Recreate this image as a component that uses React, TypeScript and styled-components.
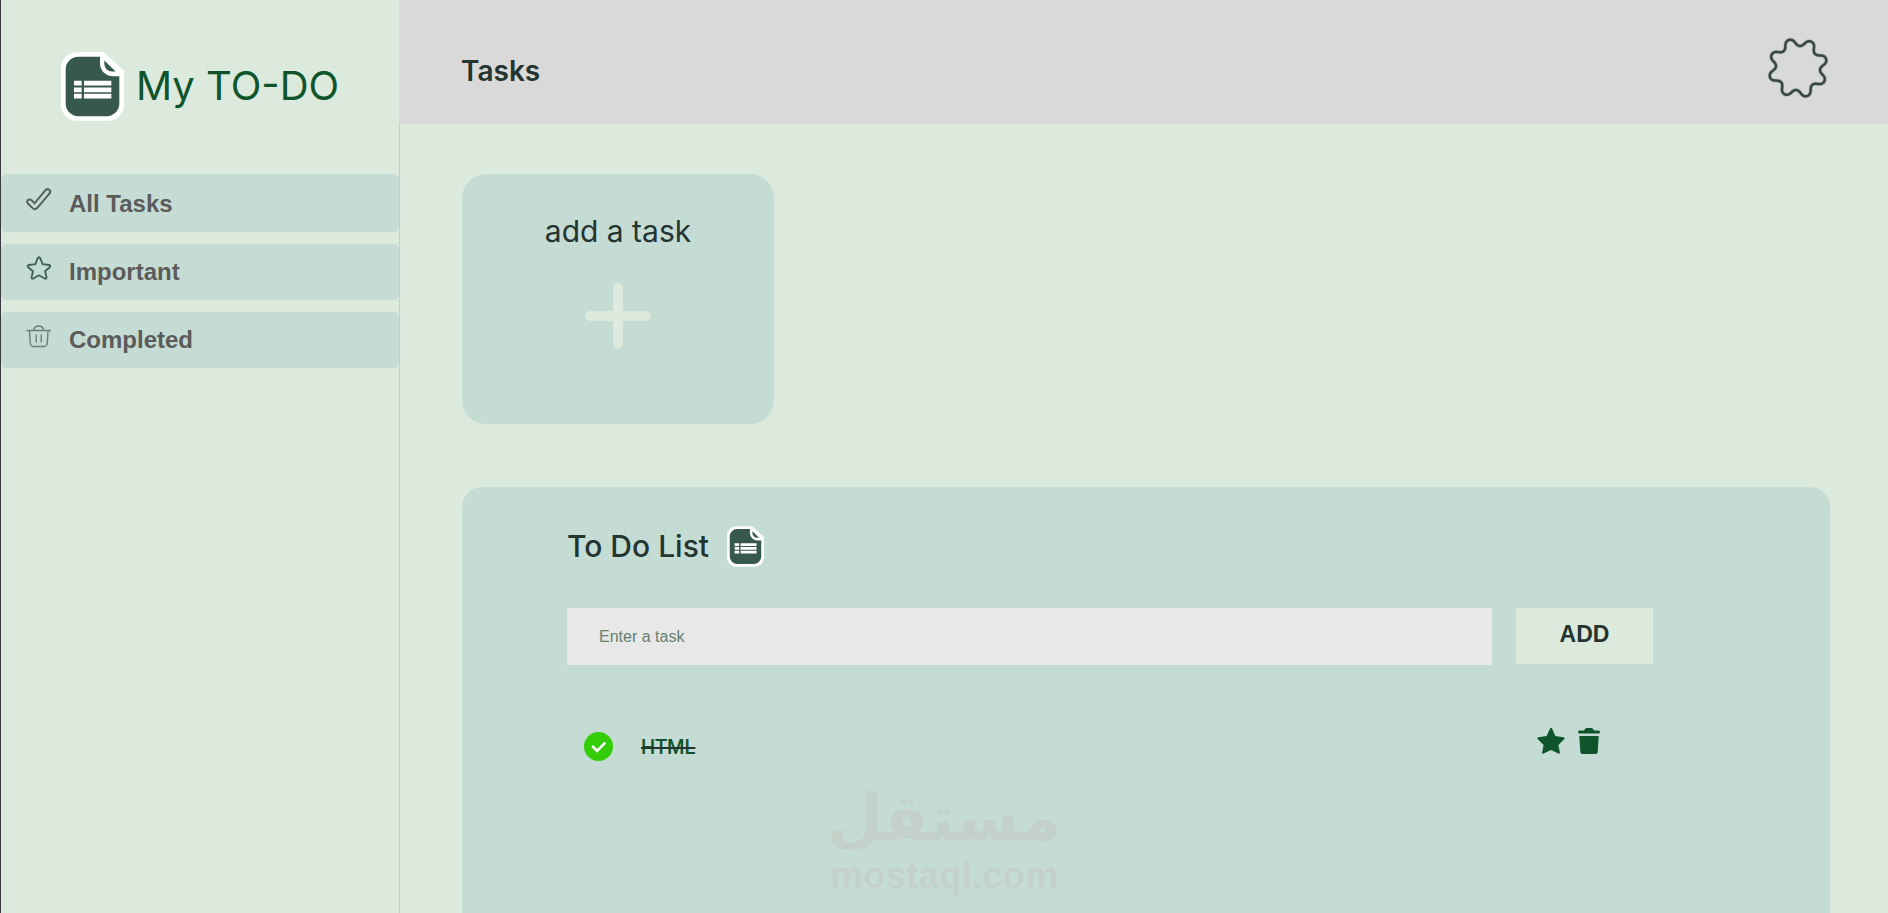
import React from "react";
import styled, { createGlobalStyle } from "styled-components";

const color = {
  page: "#dceadd",
  surface: "#c5dcd4",
  header: "#d9d9d9",
  field: "#e8e8e8",
  ink: "#243430",
  green: "#10542c",
  muted: "#5b5b5b",
  paper: "#37594b",
};

const display = `Inter, "Open Sans", sans-serif`;
const body = `"Liberation Sans", Arial, sans-serif`;

const GlobalStyle = createGlobalStyle`
  *, *::before, *::after { box-sizing: border-box; }
  body { margin: 0; background: ${color.page}; font-family: ${body}; color: ${color.ink}; }
  button, input { font-family: inherit; border: 0; margin: 0; }
  button { cursor: pointer; }
  svg { display: block; flex: none; }
`;

const Shell = styled.div`
  display: flex;
  height: 100vh;
  overflow: hidden;
  border-left: 1px solid #3b3a40;
`;

const Sidebar = styled.aside`
  flex: none;
  width: 398px;
`;

const Brand = styled.a`
  display: flex;
  align-items: center;
  gap: 12px;
  height: 174px;
  padding: 0 0 2px 60px;
  color: ${color.green};
  font: 400 40px/60px ${display};
  text-decoration: none;
  white-space: nowrap;
`;

const Nav = styled.nav`
  display: flex;
  flex-direction: column;
  gap: 12px;
`;

const NavButton = styled.button`
  display: flex;
  align-items: flex-end;
  gap: 16px;
  padding: 12px 24px 16px;
  border-radius: 6px;
  background: ${color.surface};
  color: ${color.muted};
  font-size: 24px;
  font-weight: bold;
  line-height: 24px;
  text-align: left;

  svg { align-self: flex-start; }
`;

const Column = styled.div`
  flex: 1;
  min-width: 0;
  display: flex;
  flex-direction: column;
`;

const Header = styled.header`
  flex: none;
  display: flex;
  align-items: center;
  justify-content: space-between;
  height: 124px;
  padding: 12px 58px 0 62px;
  background: ${color.header};
`;

const PageTitle = styled.h1`
  margin: 0;
  padding-top: 6px;
  font: 600 28px/36px ${display};
`;

const IconButton = styled.button`
  display: flex;
  padding: 0;
  background: none;
  color: ${color.green};
`;

const Content = styled.main`
  flex: 1;
  display: flex;
  flex-direction: column;
  align-items: flex-start;
  gap: 63px;
  padding: 50px 58px 0 62px;
  border-left: 1px solid #bfd0c8;
`;

const AddCard = styled.button`
  flex: none;
  display: flex;
  flex-direction: column;
  align-items: center;
  gap: 34px;
  width: 312px;
  height: 250px;
  padding: 39px 24px;
  border-radius: 24px;
  background: ${color.surface};
  color: ${color.ink};
  font: 400 30px/36px ${display};
`;

const Panel = styled.section`
  flex: 1;
  width: 100%;
  padding: 37px 177px 0 105px;
  border-radius: 20px 20px 0 0;
  background: ${color.surface};
`;

const PanelTitle = styled.h2`
  display: flex;
  align-items: center;
  gap: 18px;
  margin: 0 0 40px;
  font: 500 30px/44px ${display};
`;

const Form = styled.form`
  display: flex;
  align-items: flex-start;
  gap: 24px;
`;

const Field = styled.input`
  flex: 1;
  min-width: 0;
  height: 57px;
  padding: 0 32px;
  border-radius: 0;
  background: ${color.field};
  color: ${color.ink};
  font-size: 16px;

  &::placeholder { color: #64806f; opacity: 1; }
`;

const AddButton = styled.button`
  width: 137px;
  height: 56px;
  padding: 0 0 3px;
  background: ${color.page};
  color: ${color.ink};
  font-size: 23px;
  font-weight: bold;
`;

const List = styled.ul`
  margin: 62px 0 0;
  padding: 0 52px 0 17px;
  list-style: none;
`;

const Task = styled.li`
  display: flex;
  align-items: flex-start;
`;

const TaskLabel = styled.label`
  flex: 1;
  display: flex;
  align-items: center;
  gap: 28px;
  padding-top: 5px;
`;

const Tick = styled.input`
  appearance: none;
  flex: none;
  width: 29px;
  height: 29px;
  border-radius: 50%;
  background: #fff;

  &:checked {
    background: #35cd07 url("data:image/svg+xml,%3Csvg xmlns='http://www.w3.org/2000/svg' viewBox='0 0 30 30'%3E%3Cpath d='M8.500 14.500l5 5L22 11' fill='none' stroke='white' stroke-width='2.8'/%3E%3C/svg%3E") center / 100%;
  }
`;

const TaskName = styled.span`
  color: ${color.green};
  font: 500 20px/28px Roboto, sans-serif;
  text-decoration: line-through 2px ${color.ink};
`;

const Actions = styled.div`
  display: flex;
  gap: 12px;
`;

const Watermark = styled.div`
  position: fixed;
  left: 50%;
  bottom: 16px;
  transform: translateX(-50%);
  display: flex;
  flex-direction: column;
  align-items: center;
  color: #c4d1ca;
  pointer-events: none;
`;

const WatermarkArabic = styled.span`
  font: bold 64px/74px "DejaVu Sans", sans-serif;
`;

const WatermarkLatin = styled.span`
  font: bold 37px/42px ${body};
`;

const NoteLogo = ({ width, height }: { width: number; height: number }) => (
  <svg width={width} height={height} viewBox="183 156 189 206" aria-hidden="true">
    <path fill="#fff" d="M231 156H312L372 212V314A48 48 0 0 1 324 362H231A48 48 0 0 1 183 314V204A48 48 0 0 1 231 156Z" />
    <path fill={color.paper} d="M235 170H300V190A38 38 0 0 0 338 228H358V310A38 38 0 0 1 320 348H235A38 38 0 0 1 197 310V208A38 38 0 0 1 235 170Z" />
    <path fill={color.paper} d="M313 181L347 214H336A23 23 0 0 1 313 191Z" />
    <path
      stroke="#fff"
      strokeWidth="14"
      strokeLinejoin="round"
      d="M222 249H245M252 249H334M222 269H245M252 269H334M222 288H245M252 288H334"
    />
  </svg>
);

const gearPath =
  Array.from({ length: 192 }, (_, i) => {
    const angle = (i / 192) * Math.PI * 2;
    const phase = 8 * (angle + Math.PI / 10);
    const radius = 25.8 + 3.7 * Math.cos(phase);
    const turned = angle + 0.018 * Math.sin(phase * 2);
    return `${i ? "L" : "M"}${(32 + radius * Math.cos(turned)).toFixed(2)} ${(32 + radius * Math.sin(turned)).toFixed(2)}`;
  }).join("") + "Z";

const GearIcon = () => (
  <svg width="64" height="64" viewBox="0 0 64 64" fill="none" strokeLinejoin="round" aria-hidden="true">
    <path d={gearPath} stroke="#a9bdb3" strokeWidth="4" />
    <path d={gearPath} stroke="#3a4643" strokeWidth="2.5" />
  </svg>
);

const CheckIcon = () => (
  <svg width="28" height="30" viewBox="0 0 28 30" fill="none" stroke="#55605b" strokeWidth="2" strokeLinejoin="round" aria-hidden="true">
    <path d="M2.500 14.500C3.900 13 5.700 13.100 7 14.600L9.500 17.400L20.300 4.300C22.500 1.800 26.600 4 24.800 7.200L12.300 21.800C10.600 23.600 9 23.600 7.400 21.900L2.700 17.200C1.900 16.300 1.800 15.400 2.500 14.500Z" />
  </svg>
);

const StarIcon = () => (
  <svg width="28" height="28" viewBox="0 0 28 28" fill="none" stroke="#3f6052" strokeWidth="1.8" strokeLinejoin="round" aria-hidden="true">
    <path d="M12.700 2.200Q14 .3 15.200 2.200L17.600 8.100L24 9Q26.200 9.500 24.800 11.200L20 15.300L21.600 21.300Q21.600 23.300 19.700 22.500L14 19.300L8.300 22.500Q6.400 23.300 6.500 21.300L8 15.300L3.200 11.200Q1.800 9.500 4 9L10.400 8.100Z" />
  </svg>
);

const BinIcon = () => (
  <svg width="28" height="28" viewBox="0 0 28 28" fill="none" stroke="#6a7f78" strokeWidth="1.4" strokeLinecap="round" aria-hidden="true">
    <path d="M2 6.500H25.500M8.800 6.200C9.500 .5 17.700 .5 18.600 6.200M4.500 7L5.200 19Q5.600 22.500 8.600 22.500H18.900Q21.900 22.500 22.300 19L23 7M11.200 11V18M16.200 11V18" />
  </svg>
);

const nav = [
  { label: "All Tasks", icon: <CheckIcon /> },
  { label: "Important", icon: <StarIcon /> },
  { label: "Completed", icon: <BinIcon /> },
];

export default function App() {
  return (
    <>
      <GlobalStyle />
      <Shell>
        <Sidebar>
          <Brand href="#">
            <NoteLogo width={63} height={69} />
            My TO-DO
          </Brand>
          <Nav>
            {nav.map(({ label, icon }) => (
              <NavButton key={label} type="button">
                {icon}
                {label}
              </NavButton>
            ))}
          </Nav>
        </Sidebar>
        <Column>
          <Header>
            <PageTitle>Tasks</PageTitle>
            <IconButton type="button" aria-label="Settings">
              <GearIcon />
            </IconButton>
          </Header>
          <Content>
            <AddCard type="button">
              add a task
              <svg width="66" height="66" viewBox="0 0 66 66" stroke={color.page} strokeWidth="10" strokeLinecap="round" aria-hidden="true">
                <path d="M33 5V61M5 33H61" />
              </svg>
            </AddCard>
            <Panel>
              <PanelTitle>
                To Do List
                <NoteLogo width={37} height={41} />
              </PanelTitle>
              <Form onSubmit={(event) => event.preventDefault()}>
                <Field type="text" placeholder="Enter a task" aria-label="Enter a task" />
                <AddButton type="submit">ADD</AddButton>
              </Form>
              <List>
                <Task>
                  <TaskLabel>
                    <Tick type="checkbox" defaultChecked />
                    <TaskName>HTML</TaskName>
                  </TaskLabel>
                  <Actions>
                    <IconButton type="button" aria-label="Mark as important">
                      <svg width="28" height="28" viewBox="0 0 28 28" fill="currentColor" aria-hidden="true">
                        <path d="M12.900 1.800Q14 -.2 15.100 1.800L18.400 9L26.500 10.200Q28.600 10.800 27.100 12.300L21.400 17.900L22.900 25.600Q23 27.300 21.300 26.600L14 23L6.700 26.600Q5 27.300 5.100 25.600L6.600 17.900L.9 12.300Q-.6 10.800 1.500 10.200L9.600 9Z" />
                      </svg>
                    </IconButton>
                    <IconButton type="button" aria-label="Delete task">
                      <svg width="24" height="28" viewBox="0 0 24 28" fill="currentColor" aria-hidden="true">
                        <path d="M8 2Q8.500 1 9.500 1H14.500Q15.500 1 16 2L17 3.500H21.500Q23 3.800 23 5.200Q23 6.500 21.500 6.500H2.500Q1 6.500 1 5.200Q1 3.800 2.500 3.500H7ZM2.300 9H21.700L20.700 25Q20.500 27 18.500 27H5.500Q3.500 27 3.300 25Z" />
                      </svg>
                    </IconButton>
                  </Actions>
                </Task>
              </List>
            </Panel>
          </Content>
        </Column>
      </Shell>
      <Watermark>
        <WatermarkArabic lang="ar" dir="rtl">مستقل</WatermarkArabic>
        <WatermarkLatin>mostaql.com</WatermarkLatin>
      </Watermark>
    </>
  );
}
